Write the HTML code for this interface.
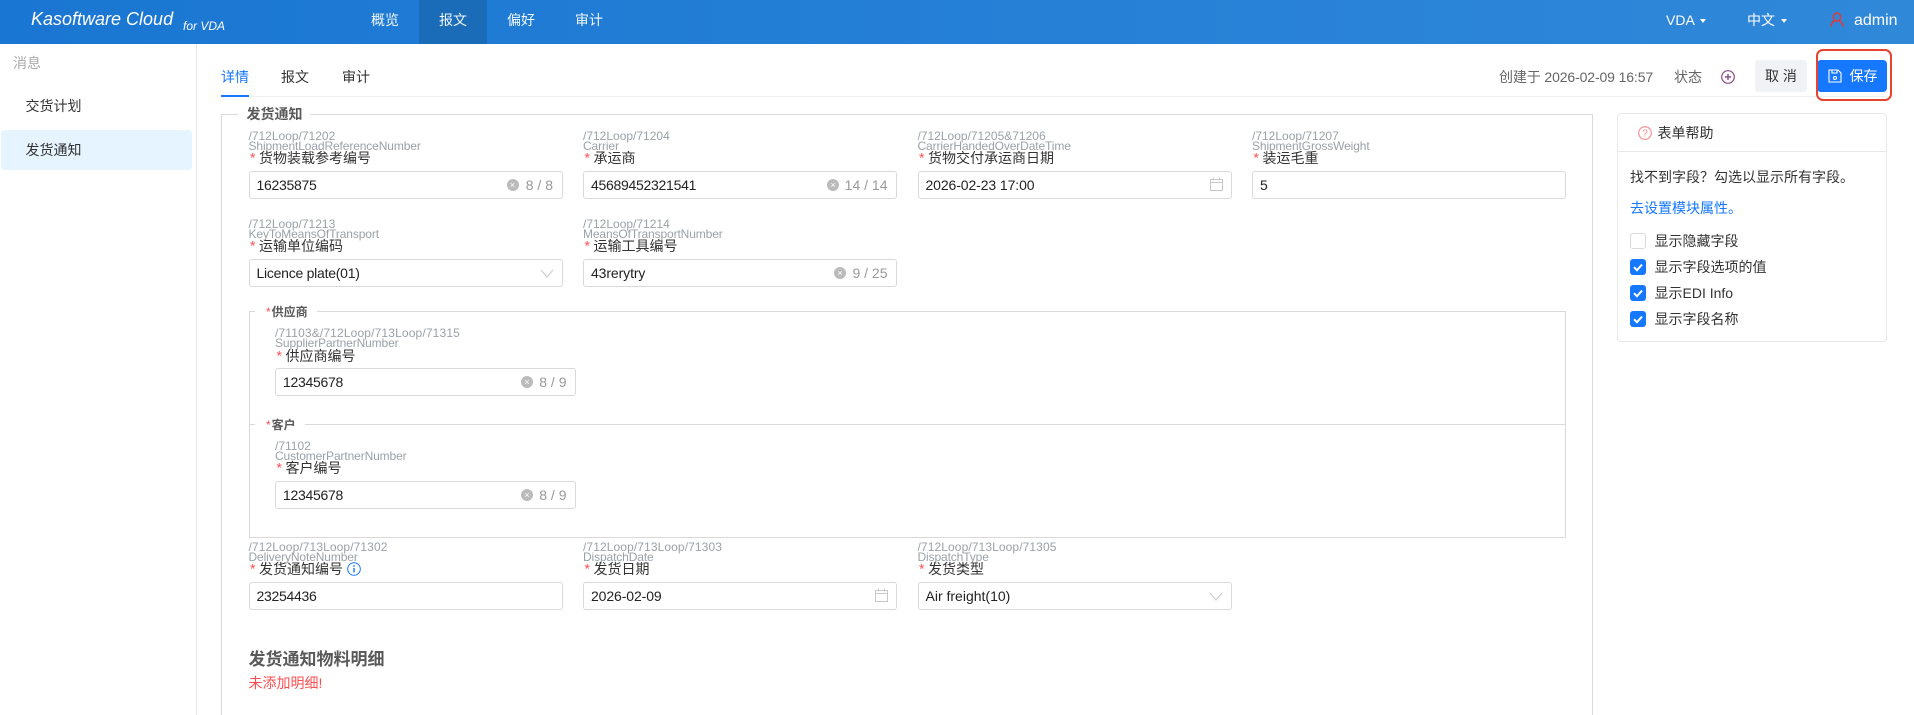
<!DOCTYPE html>
<html lang="zh"><head><meta charset="utf-8"><title>发货通知</title>
<style>
*{box-sizing:border-box}
html,body{margin:0;padding:0;width:1914px;height:715px;overflow:hidden;background:#fff}
body{position:relative;font-family:"Liberation Sans","Noto Sans CJK SC",sans-serif;font-size:14px;color:#333}
.a{position:absolute;white-space:nowrap}
.t{position:absolute;white-space:nowrap;line-height:20px;height:20px}
.e{position:absolute;white-space:nowrap;font-size:12px;line-height:10px;height:10px;color:#9aa1a9}
.n{letter-spacing:-.12px}
.p{letter-spacing:.1px}
.l{position:absolute;white-space:nowrap;font-size:14px;line-height:20px;height:20px;color:#333}
.l i{font-style:normal;color:#ff4d4f;position:absolute;left:0;top:2px;font-family:"Liberation Mono",monospace;font-size:14px}
.l span{position:absolute;left:10.5px;white-space:nowrap}
.in{position:absolute;height:28px;border:1px solid #d9d9d9;border-radius:3px;background:#fff;font-size:14px;line-height:26px;color:#222;padding-left:7px;white-space:nowrap;letter-spacing:-.28px}
.cnt{position:absolute;right:8.5px;top:0;color:#999;letter-spacing:0}
.clr{position:absolute;top:7px;width:12px;height:12px;border-radius:50%;background:#bbb;color:#fff;font-size:9px;line-height:12px;text-align:center;letter-spacing:0}
.ic{position:absolute;right:8px;top:5px}
.cb{position:absolute;left:1630px;width:16px;height:16px;border-radius:3px;background:#1677ff}
.cb.off{background:#fff;border:1px solid #d9d9d9}
.lg{position:absolute;background:#fff;height:16px}
</style></head><body>

<!-- header -->
<div class="a" style="left:0;top:0;width:1914px;height:44px;background:linear-gradient(90deg,#1976d2,#3088d9)"></div>
<div class="a" style="left:419px;top:0;width:68px;height:44px;background:#1a6bb8"></div>
<div class="a" style="left:31px;top:7px;font-size:18px;line-height:24px;font-style:italic;color:#fff;letter-spacing:0">Kasoftware Cloud</div>
<div class="a" style="left:183px;top:18px;font-size:12px;line-height:16px;font-style:italic;color:#fff">for VDA</div>
<div class="t" style="left:371px;top:10px;color:#f2f7fc">概览</div>
<div class="t" style="left:439px;top:10px;color:#f2f7fc">报文</div>
<div class="t" style="left:507px;top:10px;color:#f2f7fc">偏好</div>
<div class="t" style="left:575px;top:10px;color:#f2f7fc">审计</div>
<div class="t" style="left:1666px;top:10px;color:#fff">VDA</div>
<div class="a" style="left:1700px;top:19px;width:0;height:0;border:3px solid transparent;border-top:4px solid #fff;border-bottom:0"></div>
<div class="t" style="left:1747px;top:10px;color:#fff">中文</div>
<div class="a" style="left:1781px;top:19px;width:0;height:0;border:3px solid transparent;border-top:4px solid #fff;border-bottom:0"></div>
<svg class="a" style="left:1830px;top:12px" width="14" height="15" viewBox="0 0 14 15" fill="none" stroke="#e53935" stroke-width="1.5"><ellipse cx="7" cy="5" rx="3.6" ry="4"/><path d="M1 14.5C1.4 11 3.5 9 5 8.5M13 14.5C12.6 11 10.5 9 9 8.5"/></svg>
<div class="a" style="left:1854px;top:10px;font-size:16px;line-height:22px;color:#fff">admin</div>

<!-- sidebar -->
<div class="a" style="left:196px;top:44px;width:1px;height:671px;background:#e8e8e8"></div>
<div class="t" style="left:13px;top:53px;color:#aaa">消息</div>
<div class="t" style="left:25.5px;top:96px;color:#333">交货计划</div>
<div class="a" style="left:1px;top:130px;width:191px;height:40px;background:#e6f4ff;border-radius:4px"></div>
<div class="t" style="left:25.5px;top:140px;color:#333">发货通知</div>

<!-- tabs -->
<div class="a" style="left:221px;top:96px;width:1671px;height:1px;background:#f0f0f0"></div>
<div class="a" style="left:221px;top:95px;width:28px;height:2px;background:#1677ff"></div>
<div class="t" style="left:221px;top:67px;color:#1677ff">详情</div>
<div class="t" style="left:281px;top:67px;color:#333">报文</div>
<div class="t" style="left:342px;top:67px;color:#333">审计</div>

<div class="t" style="left:1499px;top:67px;color:#666;letter-spacing:-.12px">创建于 2026-02-09 16:57</div>
<div class="t" style="left:1674px;top:67px;color:#666">状态</div>
<svg class="a" style="left:1721px;top:70px" width="14" height="14" viewBox="0 0 14 14" fill="none" stroke="#8e4b8e" stroke-width="1.2"><circle cx="7" cy="7" r="6.3"/><path d="M4 7h6M7 4v6" stroke-width="1.4"/></svg>
<div class="a" style="left:1755px;top:60px;width:52px;height:32px;background:#f0f2f5;border-radius:4px;text-align:center;line-height:32px;color:#333">取 消</div>
<div class="a" style="left:1817px;top:60px;width:70px;height:32px;background:#1677ff;border-radius:4px"></div>
<svg class="a" style="left:1828px;top:69px" width="14" height="14" viewBox="0 0 14 14" fill="none" stroke="#fff" stroke-width="1.1"><path d="M1 1h9l3 3v9H1z"/><path d="M4 1v3h5V1"/><circle cx="7" cy="9" r="1.5"/></svg>
<div class="t" style="left:1849.5px;top:66px;color:#fff">保存</div>
<div class="a" style="left:1815.5px;top:49px;width:76px;height:52px;border:2.5px solid #e8432e;border-radius:7px"></div>

<!-- main fieldset -->
<div class="a" style="left:221px;top:114px;width:1372px;height:601px;border:1px solid #d9d9d9;border-bottom:0"></div>
<div class="lg" style="left:238px;top:106px;width:72px"></div>
<div class="t" style="left:246.5px;top:104px;font-weight:bold;color:#595959">发货通知</div>

<!-- row 1 -->
<div class="e" style="left:248.5px;top:131px">/712Loop/71202</div>
<div class="e n" style="left:248.5px;top:141px">ShipmentLoadReferenceNumber</div>
<div class="l" style="left:248.5px;top:148px"><i>*</i><span>货物装载参考编号</span></div>
<div class="in" style="left:248.5px;top:171px;width:314px">16235875<span class="clr" style="left:257px">×</span><span class="cnt">8 / 8</span></div>

<div class="e" style="left:583px;top:131px">/712Loop/71204</div>
<div class="e n" style="left:583px;top:141px">Carrier</div>
<div class="l" style="left:583px;top:148px"><i>*</i><span>承运商</span></div>
<div class="in" style="left:583px;top:171px;width:314px">45689452321541<span class="clr" style="left:243px">×</span><span class="cnt">14 / 14</span></div>

<div class="e" style="left:917.5px;top:131px">/712Loop/71205&amp;71206</div>
<div class="e n" style="left:917.5px;top:141px">CarrierHandedOverDateTime</div>
<div class="l" style="left:917.5px;top:148px"><i>*</i><span>货物交付承运商日期</span></div>
<div class="in" style="left:917.5px;top:171px;width:314px;letter-spacing:-.1px">2026-02-23 17:00<svg class="ic" width="13" height="14" viewBox="0 0 13 14" fill="none" stroke="#c8c8c8"><path d="M.5 2.5h12v11H.5zM.5 5.5h12M3.5.5v3M9.5.5v3"/></svg></div>

<div class="e" style="left:1252px;top:131px">/712Loop/71207</div>
<div class="e n" style="left:1252px;top:141px">ShipmentGrossWeight</div>
<div class="l" style="left:1252px;top:148px"><i>*</i><span>装运毛重</span></div>
<div class="in" style="left:1252px;top:171px;width:314px">5</div>

<!-- row 2 -->
<div class="e" style="left:248.5px;top:219px">/712Loop/71213</div>
<div class="e n" style="left:248.5px;top:229px">KeyToMeansOfTransport</div>
<div class="l" style="left:248.5px;top:236px"><i>*</i><span>运输单位编码</span></div>
<div class="in" style="left:248.5px;top:259px;width:314px;letter-spacing:-.25px">Licence plate(01)<svg class="ic" style="top:9px" width="14" height="9" viewBox="0 0 14 9" fill="none" stroke="#c8c8c8"><path d="M1 1l6 7 6-7"/></svg></div>

<div class="e" style="left:583px;top:219px">/712Loop/71214</div>
<div class="e n" style="left:583px;top:229px">MeansOfTransportNumber</div>
<div class="l" style="left:583px;top:236px"><i>*</i><span>运输工具编号</span></div>
<div class="in" style="left:583px;top:259px;width:314px;letter-spacing:-.1px">43rerytry<span class="clr" style="left:250px">×</span><span class="cnt">9 / 25</span></div>

<!-- supplier / customer -->
<div class="a" style="left:248.5px;top:311px;width:1317px;height:227px;border:1px solid #d9d9d9"></div>
<div class="a" style="left:248.5px;top:424px;width:1317px;height:1px;background:#d9d9d9"></div>
<div class="lg" style="left:255px;top:304px;width:62px"></div>
<div class="a" style="left:266px;top:303px;font-size:12px;line-height:18px;font-weight:bold;color:#595959"><span style="color:#ff4d4f;font-weight:normal">*</span><span style="margin-left:1px">供应商</span></div>
<div class="lg" style="left:255px;top:417px;width:50px"></div>
<div class="a" style="left:266px;top:416px;font-size:12px;line-height:18px;font-weight:bold;color:#595959"><span style="color:#ff4d4f;font-weight:normal">*</span><span style="margin-left:1px">客户</span></div>

<div class="e" style="left:275px;top:328px;letter-spacing:.15px">/71103&amp;/712Loop/713Loop/71315</div>
<div class="e n" style="left:275px;top:338px">SupplierPartnerNumber</div>
<div class="l" style="left:275px;top:346px"><i>*</i><span>供应商编号</span></div>
<div class="in" style="left:275px;top:368px;width:301px">12345678<span class="clr" style="left:245px">×</span><span class="cnt">8 / 9</span></div>

<div class="e" style="left:275px;top:441px">/71102</div>
<div class="e n" style="left:275px;top:451px">CustomerPartnerNumber</div>
<div class="l" style="left:275px;top:458px"><i>*</i><span>客户编号</span></div>
<div class="in" style="left:275px;top:481px;width:301px">12345678<span class="clr" style="left:245px">×</span><span class="cnt">8 / 9</span></div>

<!-- row 3 -->
<div class="e p" style="left:248.5px;top:542px">/712Loop/713Loop/71302</div>
<div class="e n" style="left:248.5px;top:552px">DeliveryNoteNumber</div>
<div class="l" style="left:248.5px;top:559px"><i>*</i><span>发货通知编号</span></div>
<svg class="a" style="left:347px;top:562px" width="14" height="14" viewBox="0 0 14 14" fill="none" stroke="#1677ff"><circle cx="7" cy="7" r="6.3"/><path d="M7 6v4.5" stroke-width="1.4"/><path d="M7 3.2v1.6" stroke-width="1.4"/></svg>
<div class="in" style="left:248.5px;top:582px;width:314px">23254436</div>

<div class="e p" style="left:583px;top:542px">/712Loop/713Loop/71303</div>
<div class="e n" style="left:583px;top:552px">DispatchDate</div>
<div class="l" style="left:583px;top:559px"><i>*</i><span>发货日期</span></div>
<div class="in" style="left:583px;top:582px;width:314px;letter-spacing:-.1px">2026-02-09<svg class="ic" width="13" height="14" viewBox="0 0 13 14" fill="none" stroke="#c8c8c8"><path d="M.5 2.5h12v11H.5zM.5 5.5h12M3.5.5v3M9.5.5v3"/></svg></div>

<div class="e p" style="left:917.5px;top:542px">/712Loop/713Loop/71305</div>
<div class="e n" style="left:917.5px;top:552px">DispatchType</div>
<div class="l" style="left:917.5px;top:559px"><i>*</i><span>发货类型</span></div>
<div class="in" style="left:917.5px;top:582px;width:314px;letter-spacing:0">Air freight(10)<svg class="ic" style="top:9px" width="14" height="9" viewBox="0 0 14 9" fill="none" stroke="#c8c8c8"><path d="M1 1l6 7 6-7"/></svg></div>

<div class="a" style="left:248.5px;top:648px;font-size:17px;line-height:24px;font-weight:bold;color:#595959">发货通知物料明细</div>
<div class="t" style="left:248.5px;top:673px;color:#ff4d4f;font-size:14px">未添加明细!</div>

<!-- right panel -->
<div class="a" style="left:1617px;top:113px;width:270px;height:229px;border:1px solid #e8e8e8;border-radius:4px"></div>
<div class="a" style="left:1617px;top:151px;width:270px;height:1px;background:#e8e8e8"></div>
<svg class="a" style="left:1638px;top:126px" width="14" height="14" viewBox="0 0 14 14"><circle cx="7" cy="7" r="6.3" fill="#fff" stroke="#f48a8a" stroke-width="1.1"/><text x="7" y="10.5" font-size="10" text-anchor="middle" fill="#f48a8a" font-family="Liberation Sans">?</text></svg>
<div class="t" style="left:1657.5px;top:123px;color:#333">表单帮助</div>
<div class="t" style="left:1630px;top:167px;color:#333">找不到字段&#xFF1F;勾选以显示所有字段。</div>
<div class="t" style="left:1630px;top:198px;color:#1677ff">去设置模块属性。</div>

<div class="cb off" style="top:233px"></div>
<div class="t" style="left:1654.5px;top:231px;color:#333">显示隐藏字段</div>
<div class="cb" style="top:259px"><svg width="16" height="16" viewBox="0 0 16 16" fill="none" stroke="#fff" stroke-width="2"><path d="M4 8.2l3 3 5-5.6"/></svg></div>
<div class="t" style="left:1654.5px;top:257px;color:#333">显示字段选项的值</div>
<div class="cb" style="top:285px"><svg width="16" height="16" viewBox="0 0 16 16" fill="none" stroke="#fff" stroke-width="2"><path d="M4 8.2l3 3 5-5.6"/></svg></div>
<div class="t" style="left:1654.5px;top:283px;color:#333">显示EDI Info</div>
<div class="cb" style="top:311px"><svg width="16" height="16" viewBox="0 0 16 16" fill="none" stroke="#fff" stroke-width="2"><path d="M4 8.2l3 3 5-5.6"/></svg></div>
<div class="t" style="left:1654.5px;top:309px;color:#333">显示字段名称</div>

</body></html>
